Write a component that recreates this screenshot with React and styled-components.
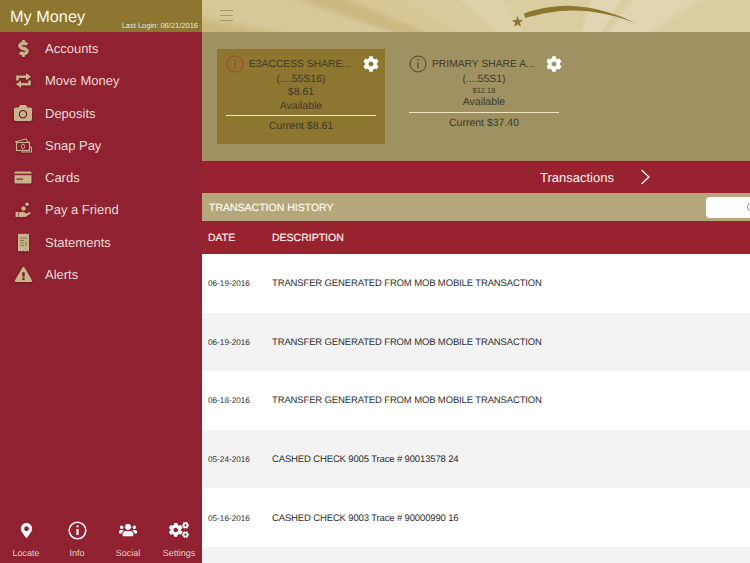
import React from "react";
import styled, { createGlobalStyle } from "styled-components";
import {
  FaDollarSign,
  FaCamera,
  FaExclamationTriangle,
  FaMapMarkerAlt,
  FaUsers,
  FaCogs,
  FaCog,
} from "react-icons/fa";
import { FiSearch } from "react-icons/fi";

const GlobalStyle = createGlobalStyle`
  html, body {
    margin: 0;
    padding: 0;
    width: 750px;
    height: 563px;
    overflow: hidden;
    font-family: "Liberation Sans", Arial, sans-serif;
    text-rendering: geometricPrecision;
  }
`;

const Page = styled.div`
  width: 750px;
  height: 563px;
  display: flex;
  overflow: hidden;
`;

const Sidebar = styled.aside`
  width: 202px;
  flex-shrink: 0;
  display: flex;
  flex-direction: column;
  background: #8f2131;
`;

const SideHeader = styled.div`
  height: 32px;
  display: flex;
  align-items: flex-end;
  justify-content: space-between;
  padding: 0 4px 2px 10px;
  box-sizing: border-box;
  background: #8c7630;
`;

const Title = styled.div`
  font-size: 16.3px;
  line-height: 25px;
  color: #fbf8ee;
`;

const LastLogin = styled.div`
  font-size: 7.5px;
  line-height: 9px;
  color: #eee6cf;
`;

const Nav = styled.nav`
  flex: 1;
  padding-top: 0.5px;
`;

const NavItem = styled.div`
  height: 32.25px;
  display: flex;
  align-items: center;
  font-size: 13px;
  color: #edd9d6;
`;

const NavIcon = styled.span`
  width: 45px;
  display: flex;
  justify-content: center;
  padding-left: 1px;
  box-sizing: border-box;
  color: #c8b38b;
  font-size: ${(p) => p.$size || 17}px;
  svg {
    filter: drop-shadow(0 1px 1px rgba(60, 10, 15, 0.45));
  }
`;

const Tabs = styled.div`
  height: 51px;
  display: flex;
  padding: 8px 0 0 0.5px;
  box-sizing: border-box;
`;

const Tab = styled.div`
  flex: 0 0 51px;
  display: flex;
  flex-direction: column;
  align-items: center;
  color: #fff;
  font-size: ${(p) => p.$size || 18}px;
`;

const TabIcon = styled.span`
  height: 20px;
  display: flex;
  align-items: center;
  margin-bottom: 8px;
`;

const TabLabel = styled.span`
  font-size: 9px;
  line-height: 10px;
  color: #e3cfcb;
`;

const Main = styled.main`
  flex: 1;
  min-width: 0;
  display: flex;
  flex-direction: column;
  background: #fff;
`;

const TopBar = styled.header`
  height: 32px;
  flex-shrink: 0;
  position: relative;
  overflow: hidden;
  padding: 10px 0 0 18px;
  box-sizing: border-box;
  background: conic-gradient(from -90deg at 364px 92px,
    #c9b77d 0deg, #c9b77d 10.5deg,
    #d8c99a 12.5deg, #d8c99a 18deg,
    #cbb982 20deg, #cbb982 22deg,
    #d6c795 24deg, #d6c795 28deg,
    #d9cb9e 30deg, #d9cb9e 40deg,
    #dfd2aa 43deg, #dfd2aa 53deg,
    #dbcda2 56deg, #dbcda2 103deg,
    #e0d5b2 107deg, #e0d5b2 120deg,
    #dbcda2 122deg, #dbcda2 124deg,
    #e0d5b0 127deg, #e0d5b0 143deg,
    #dbcda2 147deg);
`;

const Burger = styled.div`
  width: 13px;
  display: flex;
  flex-direction: column;
  gap: 4.2px;
  span {
    height: 1px;
    background: #a99a68;
  }
`;

const Logo = styled.svg`
  position: absolute;
  left: 308px;
  top: 0;
`;

const AccountsPanel = styled.section`
  height: 129px;
  flex-shrink: 0;
  display: flex;
  gap: 15px;
  padding: 17px 15px 0;
  box-sizing: border-box;
  background: #9f9161;
`;

const Card = styled.div`
  width: 168px;
  height: 95px;
  padding: 5px 9px 0;
  box-sizing: border-box;
  background: ${(p) => (p.$active ? "#8c7630" : "transparent")};
  color: #3f3a28;
  text-align: center;
`;

const CardHead = styled.div`
  height: 19px;
  display: flex;
  align-items: center;
  gap: 5px;
  color: ${(p) => p.$ring};
  font-size: 10.3px;
`;

const CardName = styled.div`
  flex: 1;
  margin-top: 2px;
  text-align: left;
  white-space: nowrap;
  color: #3f3a28;
`;

const Gear = styled.span`
  display: flex;
  color: #fff;
  font-size: 16px;
  margin-right: -3px;
`;

const CardLine = styled.div`
  font-size: ${(p) => p.$size || 10.5}px;
  line-height: ${(p) => p.$height || 13.3}px;
`;

const Rule = styled.div`
  height: 1px;
  margin: 2px 0 4px;
  background: #eee5c6;
`;

const TransactionsBar = styled.div`
  height: 32px;
  flex-shrink: 0;
  display: flex;
  align-items: center;
  padding-left: 338px;
  gap: 26px;
  background: #98232f;
  color: #fdf3f0;
  font-size: 13px;
`;

const HistoryBar = styled.div`
  height: 28px;
  flex-shrink: 0;
  display: flex;
  align-items: center;
  justify-content: space-between;
  padding-left: 7px;
  overflow: hidden;
  background: #b5a77b;
  color: #fbf8ee;
  font-size: 10.5px;
  -webkit-text-stroke: 0.2px;
`;

const HistoryTitle = styled.span`
  padding-top: 2px;
`;

const SearchBox = styled.div`
  width: 60px;
  height: 21px;
  margin-right: -16px;
  display: flex;
  align-items: center;
  justify-content: flex-end;
  padding-right: 9px;
  box-sizing: border-box;
  border-radius: 4px;
  background: #fff;
  color: #8a8a8a;
  font-size: 11px;
`;

const TableHead = styled.div`
  height: 33px;
  flex-shrink: 0;
  display: grid;
  grid-template-columns: 64px 1fr;
  align-items: center;
  padding: 1px 0 0 6px;
  box-sizing: border-box;
  background: #98232f;
  color: #fbeeee;
  font-size: 10.5px;
  -webkit-text-stroke: 0.2px;
`;

const Row = styled.div`
  height: 58.6px;
  flex-shrink: 0;
  display: grid;
  grid-template-columns: 64px 1fr;
  align-items: center;
  padding: 1px 0 0 6px;
  box-sizing: border-box;
  background: ${(p) => (p.$odd ? "#f3f3f3" : "#fff")};
  color: #2e2e2e;
`;

const DateCell = styled.span`
  font-size: 8.2px;
`;

const DescCell = styled.span`
  font-size: 9.5px;
  letter-spacing: -0.14px;
`;

const InfoIcon = () => (
  <svg width="18" height="18" viewBox="0 0 18 18" fill="none" stroke="currentColor">
    <circle cx="9" cy="9" r="8" strokeWidth="1" />
    <line x1="9" y1="7.5" x2="9" y2="13.5" strokeWidth="1.2" />
    <line x1="9" y1="4" x2="9" y2="5.6" strokeWidth="1.4" />
  </svg>
);

const BoldInfoIcon = () => (
  <svg width="19" height="19" viewBox="0 0 19 19" fill="none" stroke="currentColor">
    <circle cx="9.5" cy="9.5" r="8.3" strokeWidth="1.5" />
    <line x1="9.5" y1="8" x2="9.5" y2="14" strokeWidth="2.2" />
    <line x1="9.5" y1="4.4" x2="9.5" y2="6.2" strokeWidth="2.2" />
  </svg>
);

const DollarIcon = () => <FaDollarSign stroke="currentColor" strokeWidth={30} />;

const MoveIcon = () => (
  <svg width="17" height="17" viewBox="0 0 17 17" fill="none" stroke="currentColor" strokeWidth="2.6">
    <path d="M2.5 8.5 V4.8 H11.5" />
    <path d="M14.5 8.5 V12.2 H5.5" />
    <polygon points="11,1 16,4.8 11,8.6" fill="currentColor" stroke="none" />
    <polygon points="6,8.4 1,12.2 6,16" fill="currentColor" stroke="none" />
  </svg>
);

const SnapPayIcon = () => (
  <svg width="18" height="15" viewBox="0 0 18 15" fill="none" stroke="currentColor">
    <path d="M1 4 L12 0.8 L14 4" strokeWidth="1.1" />
    <rect x="2.5" y="4.5" width="13" height="8" strokeWidth="1.2" />
    <ellipse cx="9" cy="8.5" rx="1.6" ry="2.4" strokeWidth="1" />
    <path d="M16 9 L17.5 9 L17.5 14 L7 14" strokeWidth="1" />
  </svg>
);

const CardIcon = () => (
  <svg width="18" height="13" viewBox="0 0 18 13">
    <rect x="0.5" y="0.5" width="17" height="12" rx="1.2" fill="currentColor" />
    <rect x="0.5" y="2.6" width="17" height="1.6" fill="#8f2131" />
    <rect x="2.5" y="7.5" width="6.5" height="1.2" fill="#8f2131" />
  </svg>
);

const PayIcon = () => (
  <svg width="16" height="16" viewBox="0 0 16 16" fill="currentColor">
    <rect x="0.5" y="10" width="3" height="5" />
    <path d="M4 10.5 C6 9.5 8 9.5 10 10.5 L11 11.5 L15 10 Q16.5 10.5 15 12 L10.5 15 L4 15 Z" />
    <circle cx="8.5" cy="6.5" r="2.2" />
    <circle cx="12" cy="2.2" r="1.8" />
  </svg>
);

const StatementIcon = () => (
  <svg width="13" height="19" viewBox="0 0 13 19">
    <path
      fill="currentColor"
      d="M1 0.5 L2.8 1.3 L4.6 0.5 L6.5 1.3 L8.4 0.5 L10.2 1.3 L12 0.5 V18.5 L10.2 17.7 L8.4 18.5 L6.5 17.7 L4.6 18.5 L2.8 17.7 L1 18.5 Z"
    />
    <path stroke="#8a6a50" strokeWidth="0.9" d="M3 5 H10 M3 7.5 H7 M3 10 H7 M3 12.5 H7" />
    <path stroke="#8a6a50" strokeWidth="1" d="M9 8 V13" />
  </svg>
);

const ChevronIcon = () => (
  <svg width="10" height="16" viewBox="0 0 10 16" fill="none" stroke="currentColor" strokeWidth="1.3">
    <polyline points="1.5,1 9,8 1.5,15" />
  </svg>
);

const navItems = [
  { label: "Accounts", Icon: DollarIcon, size: 17 },
  { label: "Move Money", Icon: MoveIcon },
  { label: "Deposits", Icon: FaCamera, size: 18 },
  { label: "Snap Pay", Icon: SnapPayIcon },
  { label: "Cards", Icon: CardIcon },
  { label: "Pay a Friend", Icon: PayIcon },
  { label: "Statements", Icon: StatementIcon },
  { label: "Alerts", Icon: FaExclamationTriangle, size: 17 },
];

const rows = [
  ["06-19-2016", "TRANSFER GENERATED FROM MOB MOBILE TRANSACTION"],
  ["06-19-2016", "TRANSFER GENERATED FROM MOB MOBILE TRANSACTION"],
  ["06-18-2016", "TRANSFER GENERATED FROM MOB MOBILE TRANSACTION"],
  ["05-24-2016", "CASHED CHECK 9005 Trace # 90013578 24"],
  ["05-16-2016", "CASHED CHECK 9003 Trace # 90000990 16"],
  ["", ""],
];

export default function App() {
  return (
    <Page>
      <GlobalStyle />
      <Sidebar>
        <SideHeader>
          <Title>My Money</Title>
          <LastLogin>Last Login: 06/21/2016</LastLogin>
        </SideHeader>
        <Nav>
          {navItems.map(({ label, Icon, size }) => (
            <NavItem key={label}>
              <NavIcon $size={size}>
                <Icon />
              </NavIcon>
              {label}
            </NavItem>
          ))}
        </Nav>
        <Tabs>
          <Tab $size={15}>
            <TabIcon><FaMapMarkerAlt /></TabIcon>
            <TabLabel>Locate</TabLabel>
          </Tab>
          <Tab>
            <TabIcon><BoldInfoIcon /></TabIcon>
            <TabLabel>Info</TabLabel>
          </Tab>
          <Tab>
            <TabIcon><FaUsers /></TabIcon>
            <TabLabel>Social</TabLabel>
          </Tab>
          <Tab $size={20}>
            <TabIcon><FaCogs /></TabIcon>
            <TabLabel>Settings</TabLabel>
          </Tab>
        </Tabs>
      </Sidebar>
      <Main>
        <TopBar>
          <Burger>
            <span />
            <span />
            <span />
          </Burger>
          <Logo width="130" height="32" viewBox="0 0 130 32">
            <polygon
              fill="#8c7630"
              points="7.5,16 8.91,20.06 13.2,20.15 9.78,22.74 11.03,26.85 7.5,24.4 3.97,26.85 5.22,22.74 1.8,20.15 6.09,20.06"
            />
            <path
              fill="#8c7630"
              d="M14 13.5 C28 8 50 5 62 6 C85 7 108 14 127 24 C105 15 85 10.5 62 10.5 C47 10.5 30 14 15 18 Z"
            />
          </Logo>
        </TopBar>
        <AccountsPanel>
          <Card $active>
            <CardHead $ring="#a8402a">
              <InfoIcon />
              <CardName>E3ACCESS SHARE...</CardName>
              <Gear><FaCog /></Gear>
            </CardHead>
            <CardLine>(....55S16)</CardLine>
            <CardLine>$8.61</CardLine>
            <CardLine>Available</CardLine>
            <Rule />
            <CardLine>Current $8.61</CardLine>
          </Card>
          <Card>
            <CardHead $ring="#4a452f">
              <InfoIcon />
              <CardName>PRIMARY SHARE A...</CardName>
              <Gear><FaCog /></Gear>
            </CardHead>
            <CardLine>(....55S1)</CardLine>
            <CardLine $size={7.5} $height={10}>$12.18</CardLine>
            <CardLine>Available</CardLine>
            <Rule />
            <CardLine>Current $37.40</CardLine>
          </Card>
        </AccountsPanel>
        <TransactionsBar>
          Transactions
          <ChevronIcon />
        </TransactionsBar>
        <HistoryBar>
          <HistoryTitle>TRANSACTION HISTORY</HistoryTitle>
          <SearchBox><FiSearch /></SearchBox>
        </HistoryBar>
        <TableHead>
          <span>DATE</span>
          <span>DESCRIPTION</span>
        </TableHead>
        {rows.map(([date, desc], i) => (
          <Row key={i} $odd={i % 2 === 1}>
            <DateCell>{date}</DateCell>
            <DescCell>{desc}</DescCell>
          </Row>
        ))}
      </Main>
    </Page>
  );
}
